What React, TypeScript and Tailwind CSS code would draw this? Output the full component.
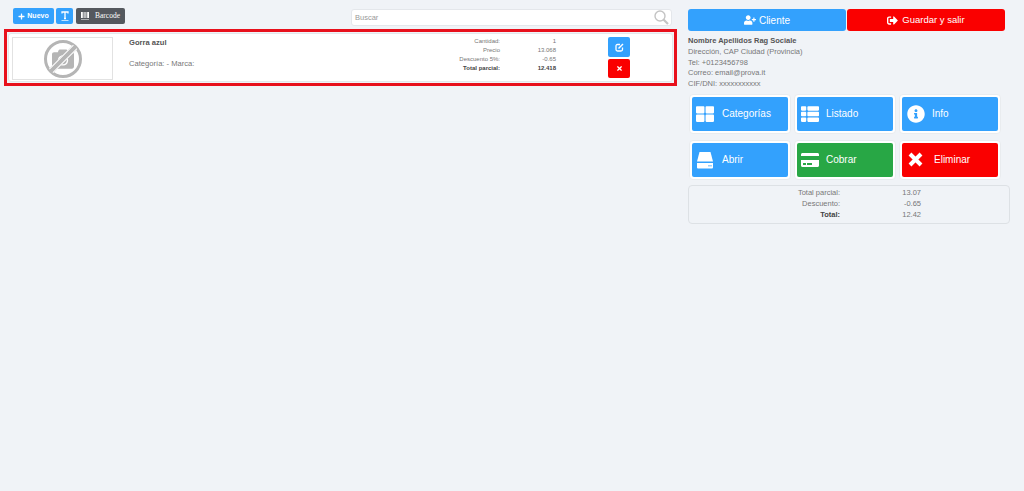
import { FaPlus, FaUserPlus, FaSignOutAlt, FaThLarge, FaThList, FaInfoCircle, FaCreditCard, FaTimes, FaCamera } from "react-icons/fa";

function Tile({ label, icon, bg, gap, pl }: { label: string; icon: React.ReactNode; bg: string; gap: string; pl: string }) {
  return (
    <div className="h-[40px] w-[102px] rounded-[4px] border border-[#e9ecef] bg-white p-[2px]">
      <div className={`flex h-full items-center rounded-[2px] text-[10px] text-white ${bg} ${gap} ${pl}`}>
        {icon}
        <span>{label}</span>
      </div>
    </div>
  );
}

function Row({ k, v, bold }: { k: string; v: string; bold?: boolean }) {
  return (
    <div className={`flex h-[9px] items-center text-[6px] leading-[9px] ${bold ? "font-bold text-[#444]" : "text-[#777]"}`}>
      <span className="w-[120px] text-right">{k}</span>
      <span className="w-[56px] text-right">{v}</span>
    </div>
  );
}

function Drive() {
  return (
    <svg width="18" height="18" viewBox="0 0 18 18" fill="white">
      <path d="M3.5 1H14.5L17 10.5H1Z" />
      <path fillRule="evenodd" d="M1 12H17V16.5Q17 17.5 16 17.5H2Q1 17.5 1 16.5ZM12.5 14V15.5H13.5V14ZM14.5 14V15.5H15.5V14Z" />
    </svg>
  );
}

function BigX() {
  return (
    <svg width="15" height="15" viewBox="0 0 15 15" stroke="white" strokeWidth="4" className="ml-[1px]">
      <path d="M2 2L13 13M13 2L2 13" />
    </svg>
  );
}

export default function App() {
  return (
    <div className="flex h-[491px] w-[1024px] bg-[#f0f3f7] pt-[8px] font-['Liberation_Sans',Arial,sans-serif]">
      <div className="ml-[4px] w-[673px]">
        <div className="flex h-[18px] items-start justify-between pl-[9px] pr-[5px]">
          <div className="flex items-center gap-[2px]">
            <div className="flex h-[16px] w-[41px] items-center justify-center gap-[2px] rounded-[2px] bg-[#33a1fd] text-[7px] font-bold text-white">
              <FaPlus className="text-[7px]" />
              <span>Nuevo</span>
            </div>
            <div className="flex h-[16px] w-[17px] items-center justify-center rounded-[2px] bg-[#33a1fd] text-white">
              <svg width="8" height="10" viewBox="0 0 8 10" fill="none" stroke="white">
                <path d="M1 2.5V1H7V2.5M4 1V7.5M3 7.5H5" strokeWidth="1.3" />
                <path d="M0.5 9.5H7.5" strokeWidth="0.7" />
              </svg>
            </div>
            <div className="ml-[1px] flex h-[16px] w-[49px] items-center gap-[6px] rounded-[2px] bg-[#54585e] pl-[5px] font-['Liberation_Serif',serif] text-[7.5px] text-white">
              <svg width="8" height="8" viewBox="0 0 8 8" fill="white">
                <path d="M0 0H1.8V6H0ZM2.6 0H3.6V6H2.6ZM4.4 0H5.4V6H4.4ZM6.2 0H8V6H6.2ZM0 7H8V7.6H0Z" />
              </svg>
              <span>Barcode</span>
            </div>
          </div>
          <div className="mt-[1px] flex h-[17px] w-[321px] items-center justify-between rounded-[3px] border border-[#e4e7eb] bg-white pl-[3px] pr-[2px] text-[7.5px] text-[#999]">
            <span>Buscar</span>
            <svg width="15" height="15" viewBox="0 0 15 15" fill="none" stroke="#c4c4c4">
              <circle cx="6" cy="6" r="5" strokeWidth="1.4" />
              <path d="M9.5 9.5L14 14" strokeWidth="2.2" />
            </svg>
          </div>
        </div>
        <div className="mt-[3px] h-[57px] w-[673px] border-[3px] border-[#e8101c] p-[1px]">
          <div className="flex h-full items-stretch rounded-[3px] border border-[#e4e7eb] bg-white pl-[3px]">
            <div className="mt-[3px] flex h-[43px] w-[101px] items-center justify-center border border-[#e2e2e2]">
              <span className="relative flex h-[38px] w-[38px] items-center justify-center rounded-full border-[3.5px] border-[#b5b5b5]">
                <FaCamera className="text-[22px] text-[#b5b5b5]" />
                <span className="absolute box-content h-[3.5px] w-[34px] -rotate-45 border-y border-white bg-[#b5b5b5]" />
              </span>
            </div>
            <div className="ml-[16px] w-[240px] pt-[4px] text-[7.6px] text-[#777]">
              <div className="font-bold leading-[9px] text-[#555]">Gorra azul</div>
              <div className="mt-[12px] leading-[9px]">Categoría: - Marca:</div>
            </div>
            <div className="ml-[11px] w-[177px] pt-[3px]">
              <Row k="Cantidad:" v="1" />
              <Row k="Precio" v="13.068" />
              <Row k="Descuento 5%:" v="-0.65" />
              <Row k="Total parcial:" v="12.418" bold />
            </div>
            <div className="ml-[51px] flex flex-col gap-[2px] pt-[3px]">
              <div className="flex h-[20px] w-[22px] items-center justify-center rounded-[2px] bg-[#33a1fd] text-white">
                <svg width="9" height="9" viewBox="0 0 9 9" fill="none" stroke="white" strokeWidth="1.3">
                  <path d="M5 1.5H2.5Q1 1.5 1 3V6.5Q1 8 2.5 8H6Q7.5 8 7.5 6.5V4.5" />
                  <path d="M3.5 5.5L8 1" strokeWidth="1.5" />
                </svg>
              </div>
              <div className="flex h-[19px] w-[22px] items-center justify-center rounded-[2px] bg-[#fa0000] text-white">
                <FaTimes className="text-[7px]" />
              </div>
            </div>
          </div>
        </div>
      </div>
      <div className="ml-[11px] mt-[1px] w-[322px]">
        <div className="flex gap-[1px]">
          <div className="flex h-[22px] w-[158px] items-center justify-center gap-[3px] rounded-[3px] bg-[#33a1fd] text-[10px] text-white">
            <FaUserPlus className="text-[12px]" />
            <span>Cliente</span>
          </div>
          <div className="flex h-[22px] w-[158px] items-center justify-center gap-[4px] rounded-[3px] bg-[#fa0000] text-[9.5px] text-white">
            <FaSignOutAlt className="text-[11px]" />
            <span>Guardar y salir</span>
          </div>
        </div>
        <div className="mt-[5px] text-[7.5px] leading-[10.8px] text-[#777]">
          <div className="font-bold text-[#555]">Nombre Apellidos Rag Sociale</div>
          <div>Dirección, CAP Ciudad (Provincia)</div>
          <div>Tel: +0123456798</div>
          <div>Correo: email@prova.it</div>
          <div>CIF/DNI: xxxxxxxxxxx</div>
        </div>
        <div className="ml-[1px] mt-[4px] grid grid-cols-[102px_102px_102px] gap-x-[3px] gap-y-[6px]">
          <Tile label="Categorías" bg="bg-[#33a1fd]" pl="pl-[4px]" gap="gap-[8px]" icon={<FaThLarge className="text-[18px]" />} />
          <Tile label="Listado" bg="bg-[#33a1fd]" pl="pl-[4px]" gap="gap-[7px]" icon={<FaThList className="text-[18px]" />} />
          <Tile label="Info" bg="bg-[#33a1fd]" pl="pl-[5px]" gap="gap-[7px]" icon={<FaInfoCircle className="text-[18px]" />} />
          <Tile label="Abrir" bg="bg-[#33a1fd]" pl="pl-[4px]" gap="gap-[8px]" icon={<Drive />} />
          <Tile label="Cobrar" bg="bg-[#28a745]" pl="pl-[4px]" gap="gap-[7px]" icon={<FaCreditCard className="text-[18px]" />} />
          <Tile label="Eliminar" bg="bg-[#fa0000]" pl="pl-[5px]" gap="gap-[11px]" icon={<BigX />} />
        </div>
        <div className="mt-[5px] h-[39px] w-[322px] rounded-[4px] border border-[#dde1e5] pt-[2px] text-[7.5px] leading-[10.8px] text-[#777]">
          <div className="flex"><span className="w-[151px] text-right">Total parcial:</span><span className="w-[81px] text-right">13.07</span></div>
          <div className="flex"><span className="w-[151px] text-right">Descuento:</span><span className="w-[81px] text-right">-0.65</span></div>
          <div className="flex"><span className="w-[151px] text-right font-bold text-[#444]">Total:</span><span className="w-[81px] text-right">12.42</span></div>
        </div>
      </div>
    </div>
  );
}
